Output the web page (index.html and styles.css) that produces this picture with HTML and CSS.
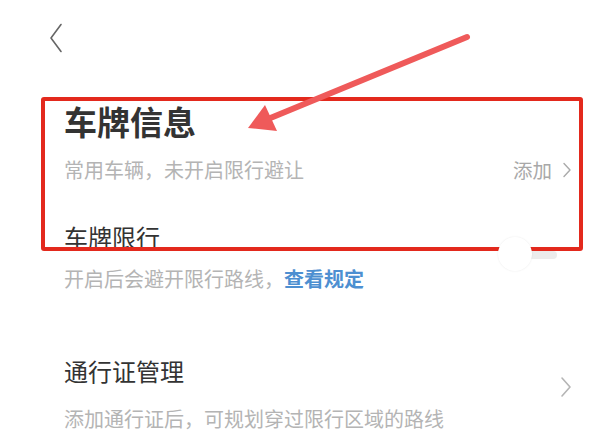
FILE: index.html
```html
<!DOCTYPE html>
<html lang="zh">
<head>
<meta charset="utf-8">
<link rel="stylesheet" href="styles.css">
</head>
<body>
<div class="page">
  <div class="topbar">
    <svg class="back" width="14" height="30" viewBox="0 0 14 30"><path d="M12 1.5 L2 15 L12 28.5" fill="none" stroke="#666" stroke-width="1.6" stroke-linejoin="round" stroke-linecap="round"/></svg>
  </div>
  <div class="content">
    <h1 class="title">车牌信息</h1>
    <div class="row sub-row">
      <span class="sub">常用车辆，未开启限行避让</span>
      <span class="action">添加
        <svg width="10" height="16" viewBox="0 0 10 16"><path d="M2 1.5 L8 8 L2 14.5" fill="none" stroke="#aaa" stroke-width="1.4" stroke-linecap="round" stroke-linejoin="round"/></svg>
      </span>
    </div>
    <div class="row item-head limit-head">
      <span class="item-title">车牌限行</span>
      <span class="toggle"><span class="knob"></span></span>
    </div>
    <div class="sub limit-sub">开启后会避开限行路线，<span class="link">查看规定</span></div>

    <div class="row pass">
      <div class="pass-text">
        <div class="item-title">通行证管理</div>
        <div class="sub pass-sub">添加通行证后，可规划穿过限行区域的路线</div>
      </div>
      <svg class="chev" width="12" height="22" viewBox="0 0 12 22"><path d="M2 2 L10 11 L2 20" fill="none" stroke="#b5b5b5" stroke-width="1.6" stroke-linecap="round" stroke-linejoin="round"/></svg>
    </div>
  </div>
</div>
<div class="highlight"></div>
<svg class="arrow" width="616" height="436" viewBox="0 0 616 436">
  <line x1="467" y1="37" x2="268" y2="119" stroke="#ef5a5a" stroke-width="6" stroke-linecap="round"/>
  <polygon points="248,128 265,105 277,131" fill="#ef5a5a"/>
</svg>
</body>
</html>
```

FILE: styles.css
```css
* { box-sizing: border-box; margin: 0; padding: 0; }
html, body {
  width: 616px;
  height: 436px;
  background: #ffffff;
  overflow: hidden;
}
body {
  font-family: "Noto Sans CJK SC", "Noto Sans", sans-serif;
  color: #333333;
  position: relative;
}
.page {
  width: 616px;
}
.topbar {
  height: 100px;
  padding: 23px 0 0 49px;
}
.back { display: block; }
.content {
  padding: 0 44px 0 64px;
}
.title {
  font-size: 33px;
  line-height: 43px;
  font-weight: 700;
  color: #333333;
}
.row {
  display: flex;
  align-items: center;
  justify-content: space-between;
}
.sub-row {
  margin-top: 13px;
  height: 28px;
}
.sub {
  font-size: 20px;
  line-height: 28px;
  color: #b4b4b4;
}
.action {
  display: flex;
  align-items: center;
  gap: 10px;
  font-size: 19.5px;
  line-height: 28px;
  color: #a8a8a8;
}
.action svg { display: block; }
.limit-head {
  margin-top: 37px;
  height: 32px;
}
.item-title {
  font-size: 24px;
  line-height: 32px;
  color: #333333;
}
.toggle {
  position: relative;
  width: 62px;
  height: 34px;
  align-self: flex-start;
  margin-top: 16px;
  margin-right: 12px;
  display: block;
}
.toggle::after {
  content: "";
  position: absolute;
  left: 31px;
  top: 14px;
  width: 28px;
  height: 8px;
  border-radius: 4px;
  background: #ececec;
}
.knob {
  position: absolute;
  left: 0;
  top: 0;
  width: 34px;
  height: 34px;
  border-radius: 50%;
  background: #ffffff;
  box-shadow: 0 0 2px rgba(0,0,0,0.09);
  z-index: 1;
}
.limit-sub {
  margin-top: 12px;
}
.link {
  color: #4d8fd1;
  font-weight: 700;
}
.pass {
  margin-top: 62px;
  align-items: center;
}
.pass-sub {
  margin-top: 18px;
}
.chev { display: block; margin-bottom: 14px; }
.highlight {
  position: absolute;
  left: 41px;
  top: 97px;
  width: 542px;
  height: 154px;
  border: 4px solid #e3291d;
  border-radius: 3px;
  pointer-events: none;
}
.arrow {
  position: absolute;
  left: 0;
  top: 0;
  pointer-events: none;
}
```
